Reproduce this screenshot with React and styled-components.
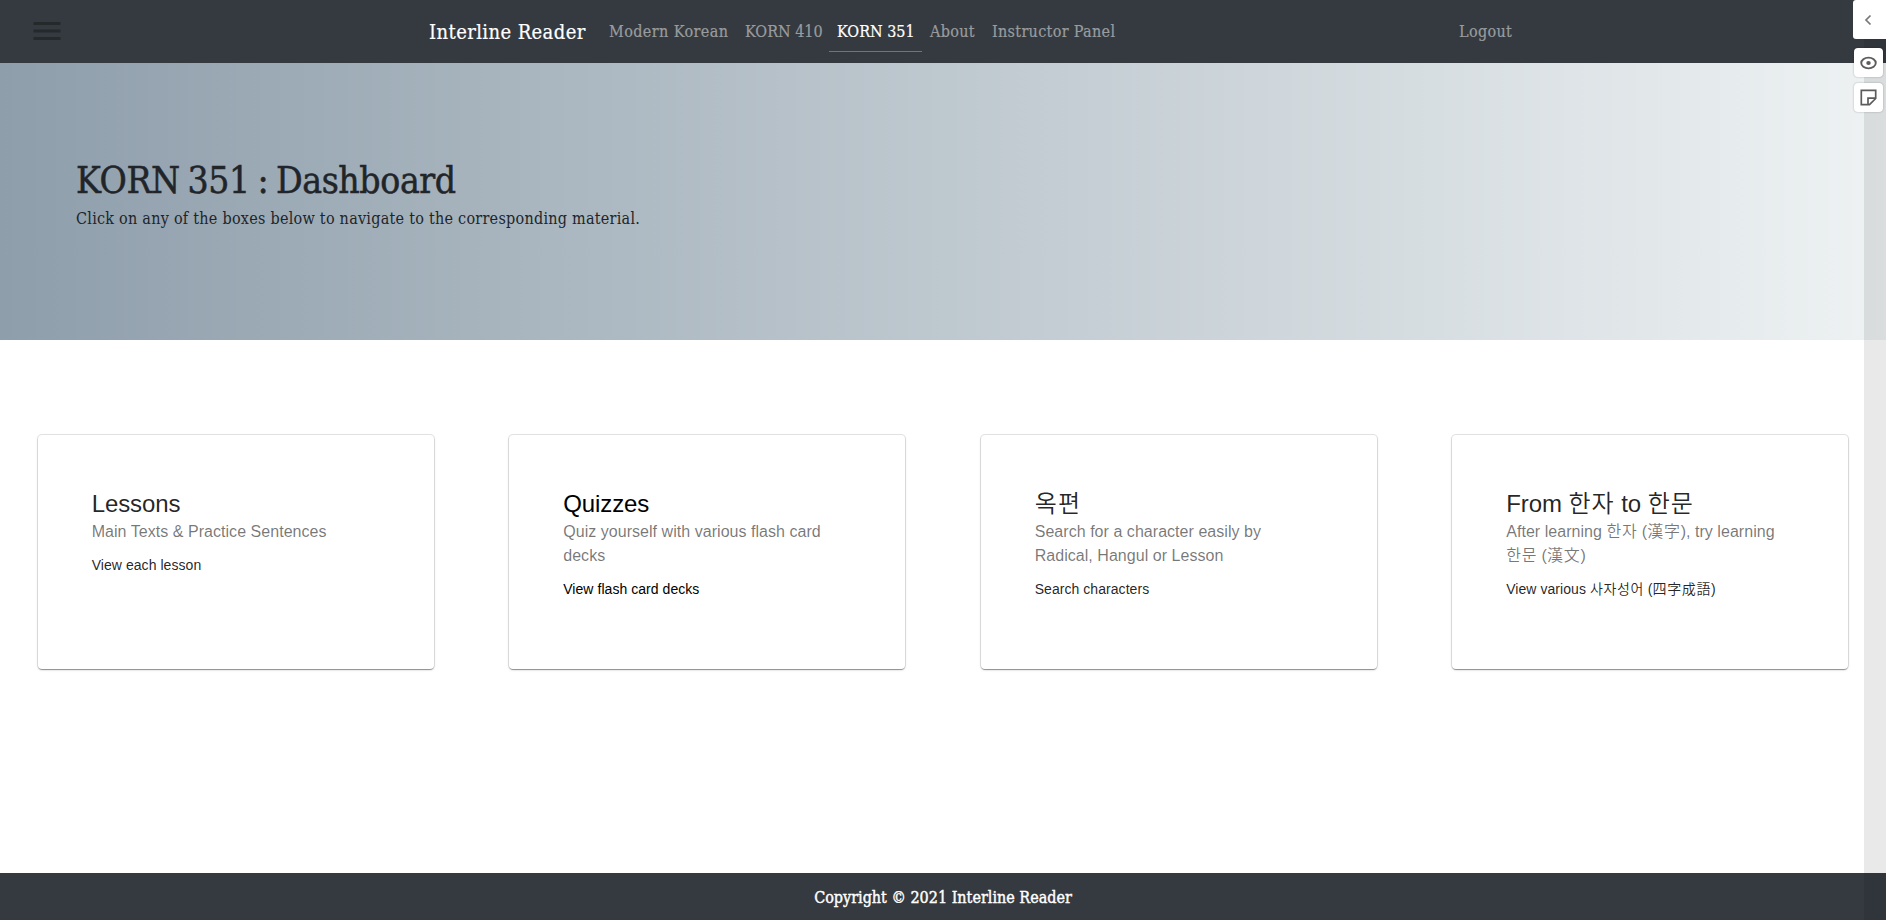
import React from 'react';
import styled, { createGlobalStyle } from 'styled-components';

const GlobalStyle = createGlobalStyle`
  *, *::before, *::after { box-sizing: border-box; }
  body {
    margin: 0;
    background: #fff;
    color: #212529;
    font-family: "DejaVu Serif Condensed", "DejaVu Serif", "Noto Sans CJK KR", serif;
    font-stretch: condensed;
    overflow: hidden;
  }
  h1, h2, p { margin: 0; font-weight: 400; }
  a { color: inherit; text-decoration: none; }
`;

const Page = styled.div`
  display: flex;
  flex-direction: column;
  height: 920px;
`;

const Navbar = styled.header`
  flex: none;
  display: flex;
  align-items: center;
  height: 63px;
  padding-left: 29px;
  background: #343a40;
`;

const MenuButton = styled.button`
  display: flex;
  width: 36px;
  height: 37px;
  margin-right: 364px;
  padding: 0;
  border: 0;
  background: none;
  color: #24292c;
`;

const Brand = styled.a`
  width: 164px;
  color: #fff;
  font-size: 20px;
  line-height: 30px;
  letter-spacing: 0.4px;
  white-space: nowrap;
  -webkit-text-stroke: 0.2px;
`;

const NavLinks = styled.nav`
  flex: none;
  display: flex;
  width: 850px;
  margin-left: 8px;
`;

const NavLink = styled.a`
  width: ${(p) => p.$width}px;
  padding: 8px 0 6px 8px;
  border-bottom: 1px solid ${(p) => (p.$active ? '#2188ea' : 'transparent')};
  color: ${(p) => (p.$active ? '#fff' : '#999c9f')};
  font-size: 16px;
  line-height: 26px;
  letter-spacing: ${(p) => p.$track || 0}px;
  white-space: nowrap;
  -webkit-text-stroke: 0.2px;
`;

const Hero = styled.section`
  flex: none;
  height: 277px;
  padding: 94px 76px 0;
  background: linear-gradient(to right, #8e9eab, #eef2f3);
`;

const HeroTitle = styled.h1`
  font-size: 37px;
  line-height: 48px;
  letter-spacing: -0.4px;
  word-spacing: -2.5px;
  -webkit-text-stroke: 0.5px;
`;

const HeroText = styled.p`
  margin-top: 2px;
  font-size: 16px;
  line-height: 24px;
  letter-spacing: 0.255px;
`;

const CardRow = styled.main`
  flex: 1;
  display: grid;
  grid-template-columns: repeat(4, 1fr);
  align-items: start;
  column-gap: 75.44px;
  padding: 94.5px 37.72px 0;
`;

const Card = styled.a`
  height: 234px;
  padding: 53px 54px;
  border-radius: 4px;
  background: #fff;
  box-shadow: 0 2px 1px -1px rgba(0, 0, 0, 0.2), 0 1px 1px 0 rgba(0, 0, 0, 0.14),
    0 1px 3px 0 rgba(0, 0, 0, 0.12), 0 0 0 1px rgba(0, 0, 0, 0.1);
  font-family: "Liberation Sans", "Noto Sans CJK KR", sans-serif;
  font-stretch: normal;
  word-break: keep-all;
  color: ${(p) => p.$ink || 'rgba(0, 0, 0, 0.87)'};
`;

const CardTitle = styled.h2`
  font-size: 24px;
  line-height: 32px;
  letter-spacing: -0.1px;
`;

const CardSubtitle = styled.p`
  margin-bottom: 11px;
  color: rgba(0, 0, 0, 0.54);
  font-size: 16px;
  line-height: 24px;
  letter-spacing: 0.04px;
`;

const CardAction = styled.p`
  font-size: 14px;
  line-height: 20px;
  letter-spacing: 0.05px;
`;

const Cjk = styled.span`
  font-weight: 350;
  letter-spacing: 0.045em;
`;

const Footer = styled.footer`
  flex: none;
  display: flex;
  justify-content: center;
  height: 47px;
  padding-top: 13px;
  background: #343a40;
  color: #fff;
  font-size: 16px;
  line-height: 24px;
  -webkit-text-stroke: 0.4px;
`;

const SideStrip = styled.aside`
  position: absolute;
  top: 0;
  right: 0;
  width: 22px;
  height: 920px;
  background: rgba(0, 0, 0, 0.085);
`;

const SideTools = styled.div`
  position: absolute;
  top: 0;
  right: 0;
  display: flex;
  flex-direction: column;
  width: 33px;
`;

const CollapseButton = styled.button`
  display: flex;
  align-items: center;
  justify-content: center;
  height: 39px;
  margin-bottom: 9px;
  padding: 0 3px 0 0;
  border: 0;
  border-radius: 3px 0 0 3px;
  background: #fff;
  color: #777;
`;

const ToolButton = styled.button`
  display: flex;
  align-items: center;
  justify-content: center;
  width: 29px;
  height: 29px;
  margin: 0 0 6px 1px;
  padding: 0;
  border: 0;
  border-radius: 4px;
  background: #fff;
  color: #5c5c5c;
  box-shadow: 0 0 2px rgba(0, 0, 0, 0.3);
`;

const navItems = [
  { label: 'Modern Korean', width: 136, track: 0.4 },
  { label: 'KORN 410', width: 92 },
  { label: 'KORN 351', width: 93, active: true },
  { label: 'About', width: 62, track: 0.3 },
  { label: 'Instructor Panel', width: 140, track: 0.32 },
];

const cards = [
  { title: 'Lessons', text: 'Main Texts & Practice Sentences', action: 'View each lesson' },
  {
    title: 'Quizzes',
    text: 'Quiz yourself with various flash card decks',
    action: 'View flash card decks',
    ink: '#000',
  },
  {
    title: '옥편',
    text: 'Search for a character easily by Radical, Hangul or Lesson',
    action: 'Search characters',
  },
  {
    title: 'From 한자 to 한문',
    text: 'After learning 한자 (漢字), try learning 한문 (漢文)',
    action: 'View various 사자성어 (四字成語)',
  },
];

// Gives runs of Hangul and Hanja their own weight and spacing.
function MixedText({ children }) {
  return children
    .split(/([\u4e00-\u9fff\uac00-\ud7a3]+)/)
    .map((part, i) => (i % 2 ? <Cjk key={i}>{part}</Cjk> : part));
}

export default function App() {
  return (
    <Page>
      <GlobalStyle />
      <Navbar>
        <MenuButton aria-label="Menu">
          <svg width="36" height="36" viewBox="0 0 24 24" fill="currentColor">
            <path d="M3 18h18v-2H3v2zm0-5h18v-2H3v2zm0-7v2h18V6H3z" />
          </svg>
        </MenuButton>
        <Brand href="#">Interline Reader</Brand>
        <NavLinks>
          {navItems.map((item) => (
            <NavLink key={item.label} href="#" $width={item.width} $active={item.active} $track={item.track}>
              {item.label}
            </NavLink>
          ))}
        </NavLinks>
        <NavLink href="#" $width={70} $track={0.35}>
          Logout
        </NavLink>
      </Navbar>
      <Hero>
        <HeroTitle>KORN 351 : Dashboard</HeroTitle>
        <HeroText>Click on any of the boxes below to navigate to the corresponding material.</HeroText>
      </Hero>
      <CardRow>
        {cards.map((card) => (
          <Card key={card.title} href="#" $ink={card.ink}>
            <CardTitle>
              <MixedText>{card.title}</MixedText>
            </CardTitle>
            <CardSubtitle>
              <MixedText>{card.text}</MixedText>
            </CardSubtitle>
            <CardAction>
              <MixedText>{card.action}</MixedText>
            </CardAction>
          </Card>
        ))}
      </CardRow>
      <Footer>Copyright © 2021 Interline Reader</Footer>
      <SideStrip />
      <SideTools>
        <CollapseButton aria-label="Collapse">
          <svg width="8" height="12" viewBox="0 0 8 12" fill="none" stroke="currentColor" strokeWidth="1.7">
            <path d="M6.500 1.500 2 6l4.500 4.500" />
          </svg>
        </CollapseButton>
        <ToolButton aria-label="View">
          <svg width="19" height="14" viewBox="0 0 17 14" preserveAspectRatio="none" fill="none" stroke="currentColor" strokeWidth="1.7">
            <ellipse cx="8.500" cy="7" rx="6.500" ry="5.300" />
            <circle cx="8.500" cy="7" r="2" fill="currentColor" stroke="none" />
          </svg>
        </ToolButton>
        <ToolButton aria-label="Notes">
          <svg width="17" height="17" viewBox="0 0 17 17" fill="none" stroke="currentColor" strokeWidth="1.7">
            <path d="M1.300 1.300h14.400v8.200L9.500 15.700H1.300zM8 15.700V9.200h7.700" />
          </svg>
        </ToolButton>
      </SideTools>
    </Page>
  );
}
